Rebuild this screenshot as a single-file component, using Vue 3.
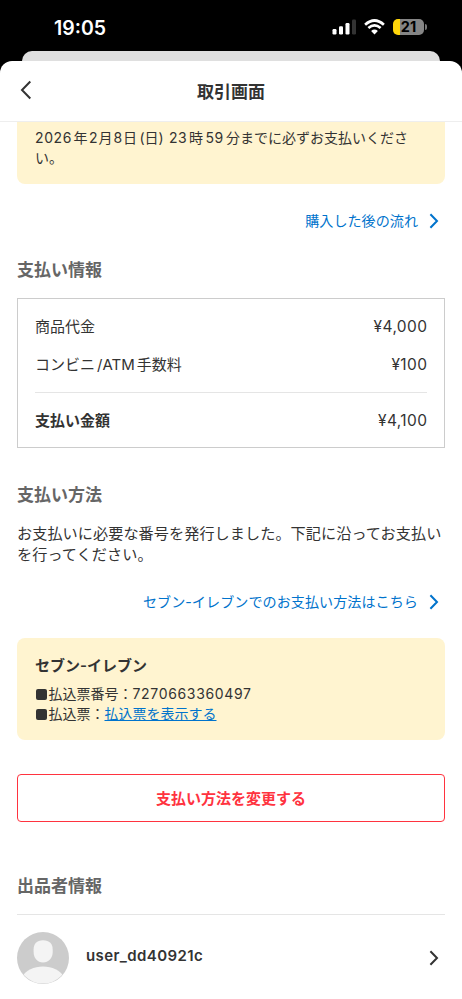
<script setup>
const fees = [
  { label: ['コンビニ', '/ATM', '手数料'], price: '¥100' },
]
const deadline = ['2026', '年', '2', '月', '8', '日', '(日)']
</script>

<template>
  <div class="screen">
    <header class="status">
      <span class="clock">19:05</span>
      <svg class="signal" width="24" height="16" viewBox="0 0 24 16">
        <rect x="0.5" y="10" width="4" height="5.5" rx="1.2" fill="#fff" />
        <rect x="7" y="7.3" width="4" height="8.2" rx="1.2" fill="#fff" />
        <rect x="13.5" y="4" width="4" height="11.5" rx="1.2" fill="#fff" />
        <rect x="20" y="0.5" width="4" height="15" rx="1.2" fill="#333" />
      </svg>
      <svg class="wifi" width="21" height="16" viewBox="0 0 21 16" fill="none" stroke="#fff" stroke-width="2.7">
        <path d="M1.1 5.7Q10.5-2.7 19.9 5.7" />
        <path d="M4.4 9.1Q10.5 3.7 16.6 9.1" />
        <path d="M7.1 12L10.5 15.4L13.9 12Q10.5 9.2 7.1 12Z" fill="#fff" stroke="none" />
      </svg>
      <div class="battery"><span class="level">21</span><i class="cap"></i></div>
    </header>
    <div class="backcard"></div>

    <main class="sheet">
      <nav class="navbar">
        <svg class="back" width="12" height="20" viewBox="0 0 12 20" fill="none" stroke="#333" stroke-width="2">
          <path d="M10.3 1.5L2 10L10.3 18.5" />
        </svg>
        <h1>取引画面</h1>
      </nav>

      <div class="content">
        <section class="notice">
          <p>
            <span class="date"><span v-for="(part, i) in deadline" :key="i" :class="'d' + i">{{ part }}</span></span><span class="hour">23</span>時<span class="minute">59</span>分までに必ずお支払いくださ<br />い。
          </p>
        </section>

        <a class="more flow">
          <span>購入した後の流れ</span>
          <svg class="chevron" width="10" height="16" viewBox="0 0 10 16"><path d="M1.4 1.2L8 8L1.4 14.8" /></svg>
        </a>

        <h2>支払い情報</h2>
        <section class="bill">
          <div class="row"><span>商品代金</span><span class="price">¥4,000</span></div>
          <div v-for="fee in fees" :key="fee.price" class="row fee">
            <span>{{ fee.label[0] }}<span class="latin">{{ fee.label[1] }}</span>{{ fee.label[2] }}</span>
            <span class="price">{{ fee.price }}</span>
          </div>
          <div class="row total"><b>支払い金額</b><span class="price">¥4,100</span></div>
        </section>

        <h2 class="method-title">支払い方法</h2>
        <p class="explain">お支払いに必要な番号を発行しました。下記に沿ってお支払い<br />を行ってください。</p>

        <a class="more howto">
          <span>セブン-イレブンでのお支払い方法はこちら</span>
          <svg class="chevron" width="10" height="16" viewBox="0 0 10 16"><path d="M1.4 1.2L8 8L1.4 14.8" /></svg>
        </a>

        <section class="store">
          <h3>セブン-イレブン</h3>
          <p><i class="square"></i>払込票番号<span class="colon">：</span><span class="number">7270663360497</span></p>
          <p><i class="square"></i>払込票<span class="colon">：</span><a class="slip">払込票を表示する</a></p>
        </section>

        <button class="change" type="button">支払い方法を変更する</button>

        <h2 class="seller-title">出品者情報</h2>
        <section class="seller">
          <svg class="avatar" width="52" height="52" viewBox="0 0 52 52">
            <defs><clipPath id="avatar-clip"><circle cx="26" cy="26" r="25.6" /></clipPath></defs>
            <circle cx="26" cy="26" r="26" fill="#ccc" />
            <g clip-path="url(#avatar-clip)" fill="#f4f4f4">
              <path d="M26 8.3C32.5 8.3 35.7 12 35.7 17.5V20C35.7 26 31.5 30.5 26 30.5S16.6 26 16.6 20V17.5C16.6 12 19.7 8.3 26 8.3Z" />
              <path d="M4 46C9 38 17 34.5 26 34.5S43 38 48 46V54H4Z" />
            </g>
          </svg>
          <span class="name">user_dd40921c</span>
          <svg class="chevron dark" width="10" height="16" viewBox="0 0 10 16"><path d="M1.4 1.2L8 8L1.4 14.8" /></svg>
        </section>
      </div>
    </main>
  </div>
</template>

<style>
body { background: #000; }
</style>

<style scoped>
* { box-sizing: border-box; }
.screen {
  display: flex;
  flex-direction: column;
  width: 462px;
  height: 999px;
  overflow: hidden;
  background: #000;
  color: #333;
  font-family: Inter, "Noto Sans CJK JP", sans-serif;
}
h1, h2, h3, p { margin: 0; }
.status {
  display: flex;
  align-items: flex-start;
  height: 51px;
  flex: none;
  color: #fff;
}
.clock {
  width: 278px;
  margin: 16px 0 0 54px;
  font-size: 19.5px;
  font-weight: 600;
  line-height: 24px;
}
.signal { margin-top: 19px; }
.wifi { margin: 19px 0 0 8px; }
.battery {
  display: flex;
  align-items: center;
  margin: 19px 0 0 8px;
}
.level {
  width: 31px;
  height: 16px;
  border-radius: 5px;
  background: linear-gradient(90deg, #ffd60a 7px, #858585 7px);
  color: #000;
  font-size: 14.5px;
  font-weight: 700;
  line-height: 16px;
  text-align: center;
}
.cap { width: 2px; height: 6px; margin-left: 1px; border-radius: 0 2px 2px 0; background: #777; }
.backcard {
  flex: none;
  height: 10px;
  margin: 0 22px;
  border-radius: 10px 10px 0 0;
  background: #dfdfdf;
}
.sheet {
  flex: 1;
  min-height: 0;
  border-radius: 12px 12px 0 0;
  background: #fff;
  overflow: hidden;
}
.navbar {
  display: grid;
  grid-template-columns: 40px 1fr 40px;
  align-items: center;
  height: 61px;
  border-bottom: 1px solid #eee;
}
.back { margin: -3px 0 0 20px; }
h1 { margin-top: 1px; font-size: 17px; font-weight: 600; line-height: 24px; text-align: center; }
.content { display: flex; flex-direction: column; padding: 0 17px; }
.notice {
  height: 62px;
  padding: 6px 18px 0;
  border-radius: 0 0 8px 8px;
  background: #fff4d0;
  font-size: 14px;
  line-height: 20px;
  white-space: nowrap;
}
.notice p > span, .date span { display: inline-block; }
.d0 { width: 38.5px; letter-spacing: 0.6px; }
.d1 { width: 15.5px; }
.d2 { width: 9.5px; }
.d3 { width: 15px; }
.d4 { width: 9.5px; }
.d5 { width: 16.5px; }
.d6 { width: 29.5px; }
.hour { width: 20px; letter-spacing: 0.4px; }
.minute { width: 23px; padding-left: 2.5px; letter-spacing: 0.4px; }
.more {
  display: flex;
  justify-content: flex-end;
  align-items: center;
  height: 20px;
  padding-right: 6px;
  color: #0073cc;
  font-size: 14.1px;
  line-height: 20px;
}
.chevron { margin-left: 11px; fill: none; stroke: #0073cc; stroke-width: 2; }
.flow { margin-top: 27px; }
h2 { margin-top: 27px; color: #666; font-size: 17px; font-weight: 600; line-height: 25px; }
.bill {
  height: 150px;
  margin-top: 15px;
  padding: 0 17px;
  border: 1px solid #ccc;
  font-size: 15px;
}
.row { display: flex; justify-content: space-between; align-items: center; height: 55px; }
.row > :first-child { margin-top: -2px; }
.price { font-size: 15.5px; letter-spacing: 0.4px; margin-right: -0.4px; }
.fee { height: 39px; padding-bottom: 17px; border-bottom: 1px solid #e5e5e5; }
.total b { font-weight: 600; }
.latin { margin: 0 2px; }
.method-title { margin-top: 35px; }
.explain { margin-top: 15px; font-size: 15.15px; letter-spacing: 0.06px; line-height: 21px; white-space: nowrap; }
.howto { margin-top: 27px; letter-spacing: 0.04px; }
.store {
  height: 102px;
  margin-top: 26px;
  padding: 18px;
  border-radius: 8px;
  background: #fff4d0;
  font-size: 14px;
  line-height: 20px;
}
h3 { margin-bottom: 8px; font-size: 15px; font-weight: 600; line-height: 20px; }
.square {
  display: inline-block;
  width: 11px;
  height: 11px;
  margin: 0 1.5px 0 1px;
  border-radius: 2px;
  background: #333;
  vertical-align: -1px;
}
.number { letter-spacing: 0.66px; }
.slip { color: #0073cc; text-decoration: underline; }
.change {
  height: 48px;
  margin-top: 34px;
  padding: 2px 0 0;
  border: 1px solid #ff333f;
  border-radius: 4px;
  background: #fff;
  color: #ff333f;
  font: 600 15px/20px Inter, "Noto Sans CJK JP", sans-serif;
}
.seller-title { margin-top: 52px; }
.seller {
  display: flex;
  align-items: center;
  height: 87px;
  margin-top: 15px;
  border-top: 1px solid #e5e5e5;
}
.name { margin: -5px auto 0 17px; font-size: 15px; font-weight: 600; letter-spacing: 0.4px; }
.avatar, .dark { margin-top: -1px; }
.dark { margin-right: 6px; stroke: #333; }
</style>
